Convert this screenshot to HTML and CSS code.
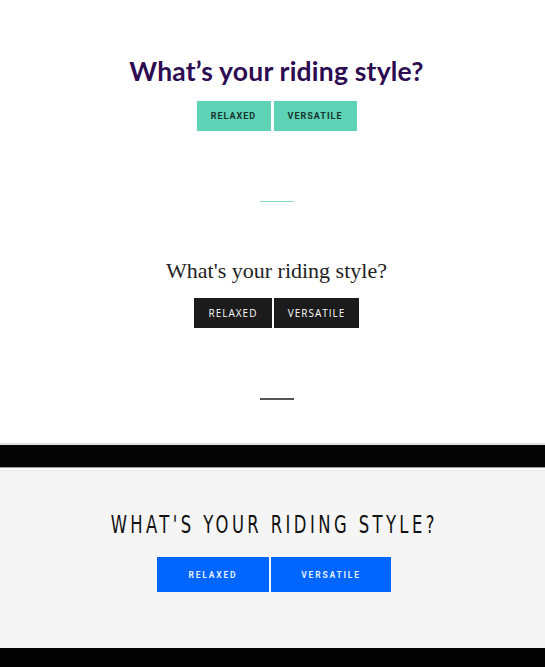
FILE: index.html
```html
<!DOCTYPE html>
<html lang="en">

<head>
    <meta charset="UTF-8">
    <meta name="viewport" content="width=device-width, initial-scale=1.0">
    <title>Riding Style</title>
    <link rel="stylesheet" href="styles.css">
</head>

<body>
    <section class="style-block playful">
        <h2>What’s your riding style?</h2>
        <div class="choices">
            <button class="choice">RELAXED</button>
            <button class="choice">VERSATILE</button>
        </div>
        <hr class="divider">
    </section>

    <section class="style-block classic">
        <h2>What's your riding style?</h2>
        <div class="choices">
            <button class="choice">RELAXED</button>
            <button class="choice">VERSATILE</button>
        </div>
        <hr class="divider">
    </section>

    <div class="band"></div>

    <section class="style-block bold">
        <h2><span>What's your riding style?</span></h2>
        <div class="choices">
            <button class="choice">RELAXED</button>
            <button class="choice">VERSATILE</button>
        </div>
    </section>

    <footer class="band-bottom"></footer>
</body>

</html>
```

FILE: styles.css
```css
body {
    margin: 0;
    background: white;
    font-family: 'Roboto', sans-serif;
}

.style-block {
    text-align: center;
    padding-left: 8px;
}

.style-block h2 {
    margin: 0;
}

.choices {
    display: flex;
    justify-content: center;
    gap: 3px;
}

.choice {
    border: none;
    padding: 0;
    cursor: pointer;
    text-transform: uppercase;
}

.divider {
    border: none;
    width: 34px;
    height: 1px;
    margin: 70px auto 0;
}

/* Style 1 - rounded, teal */
.playful {
    padding-top: 55px;
}

.playful h2 {
    font-family: 'Lato', sans-serif;
    font-weight: 700;
    font-size: 26.5px;
    line-height: 32px;
    letter-spacing: 0.2px;
    color: #2d0c52;
}

.playful .choices {
    margin-top: 14px;
}

.playful .choice {
    height: 30px;
    background: #5fd3b5;
    color: #16352f;
    font-family: 'Roboto', sans-serif;
    font-weight: 700;
    font-size: 9px;
    letter-spacing: 1px;
}

.playful .choice:first-child {
    width: 74px;
}

.playful .choice:last-child {
    width: 83px;
}

.playful .divider {
    background: #8ddfc9;
}

/* Style 2 - serif, black */
.classic {
    padding-top: 55px;
}

.classic h2 {
    font-family: 'Liberation Serif', serif;
    font-weight: normal;
    font-size: 22px;
    line-height: 28px;
    color: #222;
}

.classic .choices {
    margin-top: 13px;
    gap: 2px;
}

.classic .choice {
    height: 30px;
    background: #1b1b1b;
    color: white;
    font-family: 'Open Sans', sans-serif;
    font-size: 10px;
    letter-spacing: 1px;
}

.classic .choice:first-child {
    width: 78px;
}

.classic .choice:last-child {
    width: 85px;
}

.classic .divider {
    height: 2px;
    background: #555;
}

/* Black band */
.band {
    margin-top: 43px;
    height: 22px;
    background: #050505;
    border-top: 2px solid #e2e2e2;
    border-bottom: 1px solid #999;
}

/* Style 3 - condensed, blue */
.bold {
    margin-top: 2px;
    padding: 39px 0 56px 3px;
    border-top: 1px solid #ececec;
    background: #f5f5f6;
}

.bold h2 {
    font-family: 'DejaVu Sans', sans-serif;
    font-stretch: condensed;
    font-weight: normal;
    font-size: 24px;
    line-height: 30px;
    letter-spacing: 4.5px;
    text-transform: uppercase;
    color: #111;
}

.bold h2 span {
    display: inline-block;
    transform: scaleX(0.76);
}

.bold .choices {
    margin-top: 17px;
    gap: 2px;
}

.bold .choice {
    height: 35px;
    background: #0066ff;
    color: #e3edff;
    font-family: 'Roboto', sans-serif;
    font-weight: 700;
    font-size: 8.5px;
    letter-spacing: 1.8px;
}

.bold .choice:first-child {
    width: 112px;
}

.bold .choice:last-child {
    width: 120px;
}

.band-bottom {
    height: 19px;
    background: #030303;
}
```
